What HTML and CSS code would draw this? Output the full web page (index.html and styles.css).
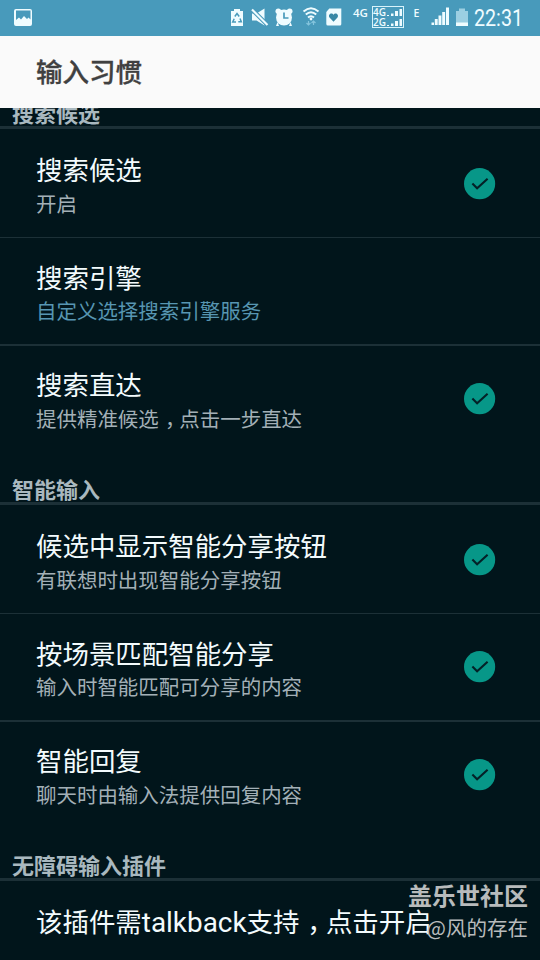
FILE: index.html
```html
<!DOCTYPE html>
<html lang="zh-CN">
<head>
<meta charset="utf-8">
<title>输入习惯</title>
<link rel="stylesheet" href="styles.css">
</head>
<body>
<svg class="defs" width="0" height="0">
  <symbol id="check" viewBox="0 0 32 32"><circle cx="15.600" cy="15.700" r="15.600" fill="#079788"/><path d="M8.400 15.600l4.700 4.700L23.600 10.700" fill="none" stroke="#042127" stroke-width="2.100"/></symbol>
</svg>
<div class="screen">
  <header class="status">
    <svg width="540" height="36" viewBox="0 0 540 36" fill="#effcff">
      <path fill-rule="evenodd" d="M16 9h14a2 2 0 0 1 2 2v13a2 2 0 0 1-2 2H16a2 2 0 0 1-2-2V11a2 2 0 0 1 2-2zM16 10.500v9.500l3-2.500 2 2 3-3.500 3 3 1.500-1.500 2 2v-9z"/>
      <path d="M231 11h3V9h6v2h3v15h-12z"/>
      <g fill="none" stroke="#489abb" stroke-width="1.500"><path d="M234.800 16.500l2.200-3 2.200 3M240 18.500l1.300 3.200h-3M236 22h-3.300l1.500-3.300"/></g>
      <path d="M252 13.500h4.500l8-5v17l-8-5H252z"/>
      <path d="M252 9.500l15.500 15.500" stroke="#489abb" stroke-width="4.200"/><path d="M252 9.500l15.500 15.500" stroke="#effcff" stroke-width="2.200"/>
      <circle cx="284" cy="17.500" r="8"/><circle cx="278.300" cy="11.300" r="2.800"/><circle cx="289.700" cy="11.300" r="2.800"/><path d="M277.500 22l-1.500 4h3zM290.500 22l1.500 4h-3z"/>
      <path d="M284 12.500v5.500h4.500" fill="none" stroke="#489abb" stroke-width="1.700"/>
      <g fill="none" stroke="#effcff" stroke-width="2"><path d="M303.500 11.500q7.500-6.500 15 0M305.800 14.500q5.200-4.500 10.400 0M308 17.500q3-2.500 6 0"/></g><circle cx="311" cy="19" r="1.400"/>
      <path d="M308.500 25v-4M306.500 23l2 2 2-2M313.500 21v4M311.500 23l2-2 2 2" fill="none" stroke="#84c4dd" stroke-width="1.200"/>
      <path d="M329 8.500h12v15.500a1.500 1.500 0 0 1-1.500 1.500h-12a1.500 1.500 0 0 1-1.500-1.500V12z" transform="translate(.3 0)"/>
      <path d="M333.500 21.800l-4-4.200c-2-3 2.200-5.600 4-2.800 1.800-2.800 6-.2 4 2.800z" fill="#3688a6"/>
      <rect x="372.500" y="6.500" width="31" height="21" fill="none" stroke="#d8f3fb"/>
      <path d="M387 15h2v1h-2zM391 13.500h2.500V16H391zM395 11h3v5h-3zM399.500 9h2.500v7h-2.500zM387 25h2v1h-2zM391 23.500h2.500V26H391zM395 21h3v5h-3zM399.500 19h2.500v7h-2.500z"/>
      <path d="M431.500 22.500h2.500v2.500h-2.500zM434.800 19h2.900v6h-2.900zM438.500 15.500h2.900V25h-2.900zM442.200 12h2.900v13h-2.900zM446 7.500h3V25h-3z"/>
      <path d="M456 11h3V8.500h6V11h3v14h-12z" fill="#9ccfe2"/><path d="M456 22.500h12V26h-12z"/>
      <g class="net"><text x="353" y="16.500" font-size="10.500" textLength="15" lengthAdjust="spacingAndGlyphs">4G</text><text x="373" y="16" font-size="10" textLength="13" lengthAdjust="spacingAndGlyphs">4G</text><text x="373" y="26" font-size="10" textLength="13" lengthAdjust="spacingAndGlyphs">2G</text><text x="413.500" y="16.500" font-size="10.500">E</text></g>
      <text class="clock" x="474" y="26" textLength="49" lengthAdjust="spacingAndGlyphs">22:31</text>
    </svg>
  </header>
  <div class="titlebar"><h1>输入习惯</h1></div>
  <main class="list">
    <h2 class="category clipped">搜索候选</h2>
    <section class="row first"><div class="copy"><div class="name">搜索候选</div><div class="summary">开启</div></div><svg class="check"><use href="#check"/></svg></section>
    <section class="row second"><div class="copy"><div class="name">搜索引擎</div><div class="summary link">自定义选择搜索引擎服务</div></div></section>
    <section class="row third"><div class="copy"><div class="name">搜索直达</div><div class="summary">提供精准候选<span class="comma">，</span>点击一步直达</div></div><svg class="check"><use href="#check"/></svg></section>
    <h2 class="category">智能输入</h2>
    <section class="row first"><div class="copy"><div class="name">候选中显示智能分享按钮</div><div class="summary">有联想时出现智能分享按钮</div></div><svg class="check"><use href="#check"/></svg></section>
    <section class="row second"><div class="copy"><div class="name">按场景匹配智能分享</div><div class="summary">输入时智能匹配可分享的内容</div></div><svg class="check"><use href="#check"/></svg></section>
    <section class="row third"><div class="copy"><div class="name">智能回复</div><div class="summary">聊天时由输入法提供回复内容</div></div><svg class="check"><use href="#check"/></svg></section>
    <h2 class="category">无障碍输入插件</h2>
    <section class="row last"><div class="copy"><div class="name">该插件需<span class="latin">talkback</span>支持<span class="comma">，</span>点击开启</div></div></section>
  </main>
  <div class="watermark"><div class="community">盖乐世社区</div><div class="author">@风的存在</div></div>
</div>
</body>
</html>
```
FILE: styles.css
```css
* { box-sizing: border-box; }
body { margin: 0; background: #01151b; font-family: "Noto Sans CJK SC", sans-serif; }
.defs { display: block; }
.screen { position: relative; width: 540px; height: 960px; overflow: hidden; display: flex; flex-direction: column; }
.status { height: 36px; flex: none; background: #489abb; }
.status svg { display: block; }
.net { font-family: "Open Sans", sans-serif; font-weight: 600; }
.clock { font-family: Roboto, sans-serif; font-size: 23px; }
.titlebar { height: 72px; flex: none; background: #fafafa; padding: 0 36px 2px; display: flex; align-items: center; }
h1 { margin: 0; font-size: 26.5px; line-height: 36px; font-weight: 500; color: #404040; -webkit-text-stroke: .3px #404040; }
.list { flex: 1; display: flex; flex-direction: column; overflow: hidden; }
.category { margin: 0; flex: none; height: 52px; padding: 0 0 1px 12px; display: flex; flex-direction: column; justify-content: flex-end; border-bottom: 3px solid #1c3037; color: #a9b8bf; font-size: 22px; line-height: 26px; font-weight: 700; }
.category.clipped { height: 21px; overflow: hidden; }
.row { flex: none; display: flex; justify-content: space-between; padding: 23px 44px 0 36px; }
.first { height: 109px; padding-top: 24px; border-bottom: 1px solid #1c3037; }
.first .copy, .third .copy { margin-top: -1px; }
.first .summary, .third .summary { margin-top: 1px; }
.second { height: 108px; padding-top: 22px; border-bottom: 2px solid #1c3037; }
.third { height: 107px; padding-top: 22px; }
.last { height: 79px; }
.name { font-size: 26.45px; line-height: 34px; color: #f3fbfd; white-space: nowrap; }
.summary { font-size: 20.48px; line-height: 32px; color: #a3b0b7; white-space: nowrap; }
.summary.link { color: #5796b2; }
.latin { font-family: Roboto, sans-serif; font-size: 27.9px; line-height: 1; }
.comma { padding-left: .3em; margin-right: -.3em; }
.check { width: 32px; height: 32px; margin-top: 15px; flex: none; }
.watermark { position: absolute; right: 12px; bottom: 17px; text-align: right; color: #b8bbbc; white-space: nowrap; }
.community { font-size: 24px; line-height: 32px; font-weight: 700; }
.author { font-size: 20.5px; line-height: 32px; }
```
